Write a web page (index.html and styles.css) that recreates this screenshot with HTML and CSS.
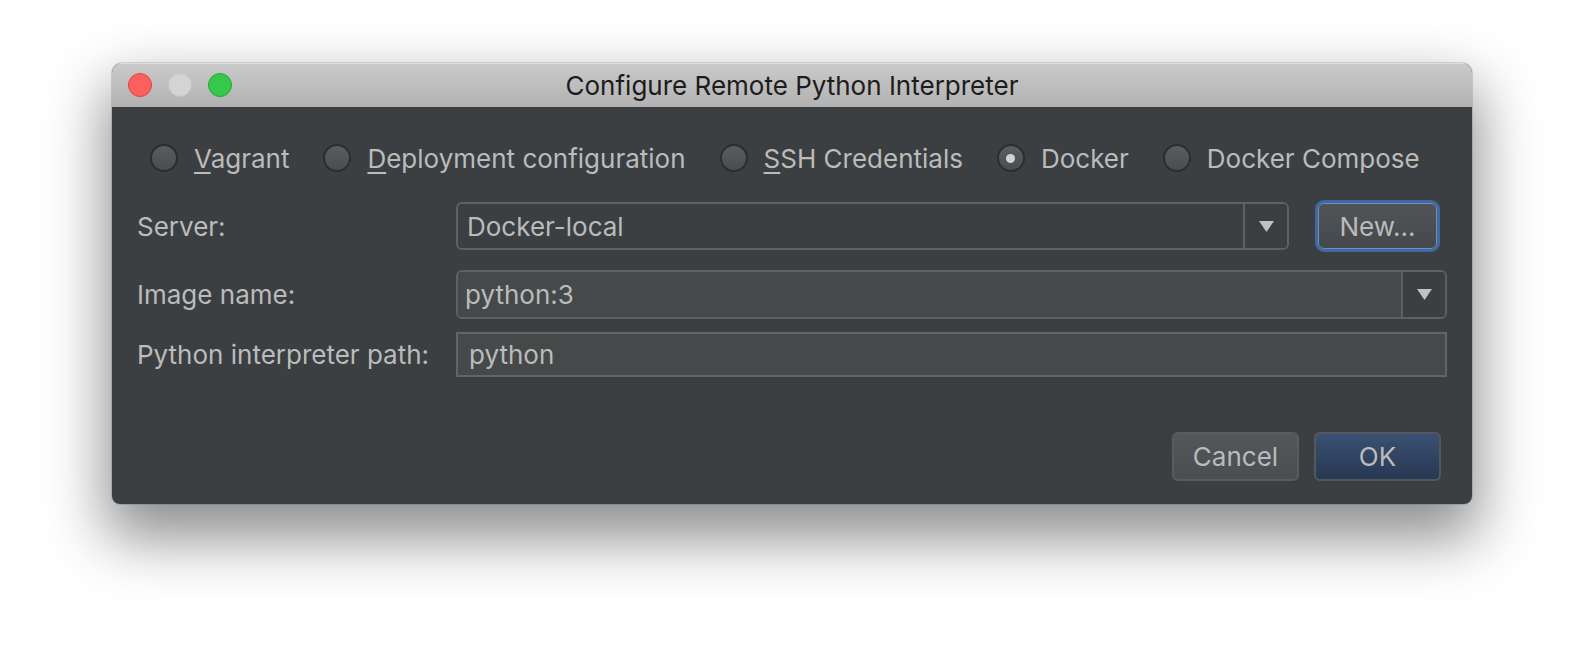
FILE: index.html
```html
<!DOCTYPE html>
<html>
<head>
<meta charset="utf-8">
<link rel="stylesheet" href="styles.css">
</head>
<body>
<div class="window">
  <div class="titlebar">
    <div class="lights">
      <span class="light red"></span>
      <span class="light gray"></span>
      <span class="light green"></span>
    </div>
    <div class="title">Configure Remote Python Interpreter</div>
    <div></div>
  </div>
  <div class="content">
    <div class="radios">
      <div class="radio"><span class="circle"></span><span><u>V</u>agrant</span></div>
      <div class="radio"><span class="circle"></span><span><u>D</u>eployment configuration</span></div>
      <div class="radio"><span class="circle"></span><span><u>S</u>SH Credentials</span></div>
      <div class="radio"><span class="circle on"></span><span>Docker</span></div>
      <div class="radio"><span class="circle"></span><span>Docker Compose</span></div>
    </div>
    <div class="row row-server">
      <span class="label">Server:</span>
      <div class="field-line">
        <div class="combo">
          <span class="value">Docker-local</span>
          <span class="arrow"><svg width="15" height="11" viewBox="0 0 15 11"><polygon points="0,0 15,0 7.5,11" fill="#c1c1c1"/></svg></span>
        </div>
        <button class="btn btn-new">New...</button>
      </div>
    </div>
    <div class="row row-image">
      <span class="label">Image name:</span>
      <div class="combo editable">
        <span class="value">python:3</span>
        <span class="arrow"><svg width="15" height="11" viewBox="0 0 15 11"><polygon points="0,0 15,0 7.5,11" fill="#c1c1c1"/></svg></span>
      </div>
    </div>
    <div class="row row-path">
      <span class="label">Python interpreter path:</span>
      <div class="textfield">python</div>
    </div>
    <div class="footer">
      <button class="btn btn-cancel">Cancel</button>
      <button class="btn btn-ok">OK</button>
    </div>
  </div>
</div>
</body>
</html>
```
FILE: styles.css
```css
html, body {
  margin: 0;
  background: #ffffff;
}
body {
  font-family: Inter, "Liberation Sans", sans-serif;
  min-height: 664px;
  padding-top: 63px;
  box-sizing: border-box;
}
.window {
  width: 1360px;
  margin: 0 0 0 112px;
  border-radius: 10px 10px 8px 8px;
  overflow: hidden;
  background: #3c3f41;
  box-shadow: 0 0 0 1px rgba(0,0,0,0.12), 0 28px 60px 6px rgba(0,0,0,0.45);
}
.titlebar {
  height: 44px;
  display: grid;
  grid-template-columns: 1fr auto 1fr;
  align-items: center;
  background: linear-gradient(#cacaca, #b2b2b2);
  box-shadow: inset 0 1px 0 #dedede;
}
.lights {
  display: flex;
  gap: 16px;
  padding-left: 16px;
}
.light {
  width: 24px;
  height: 24px;
  border-radius: 50%;
  box-sizing: border-box;
}
.red { background: #fc605c; border: 1px solid #de433d; }
.gray { background: #d4d4d4; border: 1px solid #c4c4c4; }
.green { background: #35c84a; border: 1px solid #25a833; }
.title {
  font-size: 26px;
  color: #1c1c1c;
}
.content {
  padding: 37px 25px 23px 25px;
  color: #bbbbbb;
  font-size: 26px;
}
.radios {
  display: flex;
  align-items: center;
  height: 28px;
  padding-left: 13px;
  gap: 34px;
}
.radio {
  display: flex;
  align-items: center;
  gap: 16px;
}
.radio u {
  text-decoration-thickness: 2px;
  text-underline-offset: 4px;
}
.circle {
  width: 28px;
  height: 28px;
  box-sizing: border-box;
  border-radius: 50%;
  border: 2px solid #2b2d2e;
  background: linear-gradient(#5a5d5f, #4a4d4f);
  display: flex;
  align-items: center;
  justify-content: center;
}
.circle.on::after {
  content: "";
  width: 9px;
  height: 9px;
  border-radius: 50%;
  background: #d2d2d2;
}
.row {
  display: grid;
  grid-template-columns: 319px 1fr;
  align-items: center;
}
.row-server { margin-top: 30px; height: 48px; }
.row-image { margin-top: 20px; height: 49px; }
.row-path { margin-top: 13px; height: 45px; }
.field-line {
  display: flex;
  align-items: center;
  height: 100%;
}
.combo {
  flex: 1;
  display: flex;
  height: 100%;
  box-sizing: border-box;
  border: 2px solid #5e6061;
  border-radius: 6px;
  overflow: hidden;
  background: #3c3f41;
}
.combo .value {
  flex: 1;
  display: flex;
  align-items: center;
  padding-left: 9px;
}
.combo.editable .value {
  background: #45494a;
  padding-left: 7px;
}
.combo .arrow {
  width: 42px;
  border-left: 2px solid #5e6061;
  display: flex;
  align-items: center;
  justify-content: center;
  background: #3c3f41;
}
.textfield {
  height: 100%;
  box-sizing: border-box;
  border: 2px solid #646464;
  background: #45494a;
  display: flex;
  align-items: center;
  padding-left: 11px;
}
.btn {
  font-family: inherit;
  font-size: 26px;
  color: #bbbbbb;
  box-sizing: border-box;
  border-radius: 6px;
  padding: 0;
  cursor: default;
}
.btn-new {
  width: 119px;
  height: 46px;
  margin-left: 29px;
  margin-right: 10px;
  border: 1px solid #6690c6;
  background: linear-gradient(#505456, #45494b);
  box-shadow: 0 0 0 3px #3f6a9b;
}
.footer {
  display: flex;
  justify-content: flex-end;
  gap: 15px;
  margin-top: 55px;
  padding-right: 6px;
}
.btn-cancel, .btn-ok {
  width: 127px;
  height: 49px;
  border: 2px solid #595c5e;
}
.btn-cancel {
  background: linear-gradient(#535759, #4a4e50);
}
.btn-ok {
  background: linear-gradient(#3a5073, #283853);
  border-color: #53585e;
}
```
